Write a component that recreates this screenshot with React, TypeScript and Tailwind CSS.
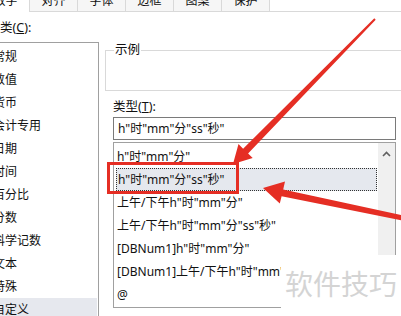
import React from 'react';

const categories = ['常规', '数值', '货币', '会计专用', '日期', '时间', '百分比', '分数', '科学记数', '文本', '特殊', '自定义'];

const formats = [
  'h"时"mm"分"',
  'h"时"mm"分"ss"秒"',
  '上午/下午h"时"mm"分"',
  '上午/下午h"时"mm"分"ss"秒"',
  '[DBNum1]h"时"mm"分"',
  '[DBNum1]上午/下午h"时"mm"分"',
  '@',
];

const tabs = ['对齐', '字体', '边框', '图案', '保护'];

const App = () => {
  const selectedCategory = '自定义';
  const selectedFormat = 1;

  return (
    <div className="relative h-[316px] w-[401px] overflow-hidden bg-white text-[12px] text-[#111] font-['Noto_Sans','Noto_Sans_CJK_SC',sans-serif]">
      {/* tab strip, cut off at the top */}
      <div className="-mt-[10px] flex h-[22px]">
        <div className="-ml-[18px] flex w-[48px] shrink-0 items-center justify-center border-r border-[#d9d9d9] bg-white">
          数字
        </div>
        {tabs.map((tab) => (
          <div
            key={tab}
            className="flex w-[48px] shrink-0 items-center justify-center border-b border-r border-[#d9d9d9] bg-[#f6f6f6]"
          >
            {tab}
          </div>
        ))}
        <div className="flex-1 border-b border-[#d9d9d9]" />
      </div>

      <div className="flex">
        {/* category column */}
        <div className="w-[99px] shrink-0">
          <div className="mt-[8px] h-[16px] text-[12.5px] leading-[16px]">
            类(<span className="underline">C</span>):
          </div>
          <div className="-ml-[10px] mt-[6px] h-[300px] w-[109px] border border-[#a0a0a0] pt-[2px]">
            {categories.map((cat) => (
              <div
                key={cat}
                className={`mx-[1px] flex h-[23px] items-center whitespace-nowrap pl-[1px] ${
                  cat === selectedCategory ? 'bg-[#e6e8ee]' : ''
                }`}
              >
                {cat}
              </div>
            ))}
          </div>
        </div>

        {/* right side */}
        <div className="ml-[6px] flex-1">
          <div className="relative -mr-[10px] mt-[38px] h-[41px] border border-[#d9d9d9]">
            <span className="absolute -top-[9px] left-[8px] bg-white px-[1px] text-[12.5px] leading-[16px]">示例</span>
          </div>

          <div className="ml-[8px] mt-[8px] h-[16px] text-[12.5px] leading-[16px]">
            类型(<span className="underline">T</span>):
          </div>

          <div className="ml-[8px] mt-[2px] flex h-[23px] w-[283px] items-center border border-[#7a7a7a] pl-[4px] whitespace-nowrap">
            h"时"mm"分"ss"秒"
          </div>

          <div className="ml-[8px] mt-[2px] flex h-[166px] w-[283px] border border-[#a0a0a0]">
            <div className="min-w-0 flex-1 pt-[2px]">
              {formats.map((f, i) => (
                <div
                  key={f}
                  className={`ml-[2px] mr-[1px] flex h-[23px] items-center whitespace-nowrap pl-[1px] ${
                    i === selectedFormat ? 'border border-dotted border-[#333] bg-[#e5e8ee]' : ''
                  }`}
                >
                  {f}
                </div>
              ))}
            </div>
            <div className="flex w-[17px] shrink-0 justify-center bg-[#f0f0f0] pt-[8px]">
              <svg width="9" height="6" viewBox="0 0 9 6">
                <path d="M1 5 L4.5 1.5 L8 5" fill="none" stroke="#606060" strokeWidth="1.6" />
              </svg>
            </div>
          </div>
        </div>
      </div>

      {/* red highlight box */}
      <div className="absolute left-[107px] top-[162px] h-[32px] w-[132px] border-[3px] border-[#e52e24]" />

      {/* watermark */}
      <div className="absolute left-[281px] top-[255px] h-[61px] w-[120px] bg-white pl-[4px] pt-[14px] text-[28px] leading-[28px] text-[#d4d4d4] font-['Noto_Sans_CJK_SC',sans-serif]">
        软件技巧
      </div>

      {/* arrows */}
      <svg className="pointer-events-none absolute inset-0" width="401" height="316" viewBox="0 0 401 316">
        <polygon
          fill="#e52e24"
          points="375.7,19.7 248.1,153.6 252.7,158.1 233,164 238.5,144.1 243.1,148.7 374.3,18.3"
        />
        <polygon
          fill="#e52e24"
          points="405.6,216 283.2,189.4 285,181.6 263,188 279.8,203.5 281.6,196.2 404.4,221"
        />
      </svg>
    </div>
  );
};

export default App;
